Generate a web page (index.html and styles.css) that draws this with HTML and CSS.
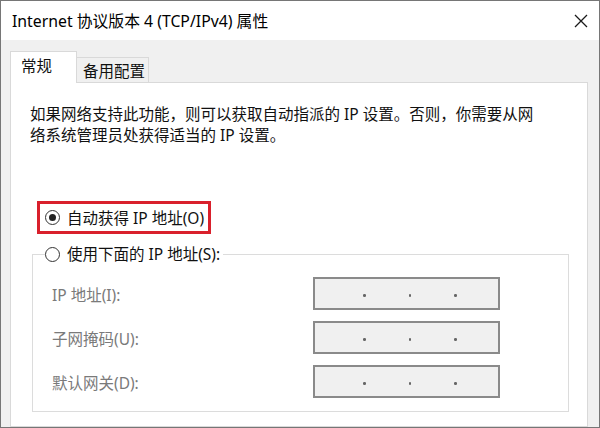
FILE: index.html
```html
<!DOCTYPE html>
<html lang="zh-CN">
<head>
<meta charset="utf-8">
<title>Internet 协议版本 4 (TCP/IPv4) 属性</title>
<link rel="stylesheet" href="styles.css">
</head>
<body>
<div class="window">
  <div class="titlebar">
    <span class="title">Internet 协议版本 4 (TCP/IPv4) 属性</span>
    <svg class="close" width="14" height="14" viewBox="0 0 14 14" aria-hidden="true">
      <path d="M1 1 L13 13 M13 1 L1 13" stroke="#1a1a1a" stroke-width="1.3" fill="none"/>
    </svg>
  </div>
  <div class="client">
    <div class="tabs">
      <div class="tab active">常规</div>
      <div class="tab">备用配置</div>
    </div>
    <div class="panel">
      <p class="desc">如果网络支持此功能，则可以获取自动指派的 IP 设置。否则，你需要从网<br>络系统管理员处获得适当的 IP 设置。</p>
      <div class="highlight">
        <label class="radio"><span class="circle checked"></span><span>自动获得 IP 地址(O)</span></label>
      </div>
      <fieldset class="group">
        <legend><label class="radio"><span class="circle"></span><span>使用下面的 IP 地址(S):</span></label></legend>
        <div class="fields">
          <span class="flabel">IP 地址(I):</span>
          <div class="ipbox"><span class="dot"></span><span class="dot"></span><span class="dot"></span></div>
          <span class="flabel">子网掩码(U):</span>
          <div class="ipbox"><span class="dot"></span><span class="dot"></span><span class="dot"></span></div>
          <span class="flabel">默认网关(D):</span>
          <div class="ipbox"><span class="dot"></span><span class="dot"></span><span class="dot"></span></div>
        </div>
      </fieldset>
    </div>
  </div>
</div>
</body>
</html>
```
FILE: styles.css
```css
* { box-sizing: border-box; }
html, body { margin: 0; padding: 0; background: #ffffff; }
body {
  font-family: "Segoe UI", "Noto Sans", "Noto Sans CJK SC", sans-serif;
  color: #111;
}
.window {
  width: 600px;
  height: 428px;
  border: 1px solid #767676;
  overflow: hidden;
  background: #f0f0f0;
  display: flex;
  flex-direction: column;
}
.titlebar {
  height: 39px;
  flex: none;
  background: #ffffff;
  display: flex;
  align-items: center;
  justify-content: space-between;
  padding: 0 11px 0 11px;
}
.title {
  font-size: 15.8px;
  color: #000;
}
.close { display: block; }
.client {
  flex: 1;
  padding: 11px 11px 0 9px;
  display: flex;
  flex-direction: column;
}
.tabs {
  display: flex;
  align-items: flex-end;
}
.tab {
  font-family: "Noto Sans CJK SC", sans-serif;
  font-size: 15.5px;
  line-height: 20px;
  border: 1px solid #d9d9d9;
  border-bottom: none;
}
.tab.active {
  width: 67px;
  height: 32px;
  margin-bottom: -1px;
  background: #ffffff;
  padding: 3px 0 0 10px;
  position: relative;
  z-index: 1;
}
.tab:not(.active) {
  width: 72px;
  height: 25px;
  border-left: none;
  background: #f0f0f0;
  padding: 2px 0 0 6px;
}
.panel {
  flex: 1;
  background: #ffffff;
  border: 1px solid #d9d9d9;
  padding: 21px 0 0 19px;
}
.desc {
  margin: 0;
  font-size: 15.5px;
  line-height: 21px;
  color: #111;
}
.highlight {
  display: inline-flex;
  align-items: center;
  height: 33px;
  margin: 55px 0 0 7px;
  border: 3px solid #d9202c;
  padding: 0 4px 0 5px;
}
.radio {
  display: flex;
  align-items: center;
  gap: 7px;
  font-size: 15.5px;
  line-height: 22px;
  color: #111;
}
.circle {
  width: 15px;
  height: 15px;
  border: 1.3px solid #333;
  border-radius: 50%;
  background: #fff;
  display: flex;
  align-items: center;
  justify-content: center;
  flex: none;
}
.circle.checked::after {
  content: "";
  width: 7px;
  height: 7px;
  border-radius: 50%;
  background: #222;
}
.group {
  margin: 9px 18px 0 2px;
  border: 1px solid #dcdcdc;
  padding: 0 0 13px 12px;
  min-width: 0;
}
.group legend {
  padding: 0 3px 0 0;
}
.fields {
  display: grid;
  grid-template-columns: 261px 187px;
  grid-auto-rows: 33px;
  row-gap: 11px;
  margin: 12px 0 0 7px;
  align-items: center;
}
.flabel {
  font-size: 15.5px;
  color: #7a7a7a;
  line-height: 20px;
  padding-top: 2px;
}
.ipbox {
  height: 33px;
  border: 2px solid #8a8a8a;
  background: #f0f0f0;
  display: flex;
  align-items: center;
  gap: 43px;
  padding: 4px 0 0 48px;
}
.dot {
  width: 2.5px;
  height: 2.5px;
  border-radius: 50%;
  background: #666;
}
```
